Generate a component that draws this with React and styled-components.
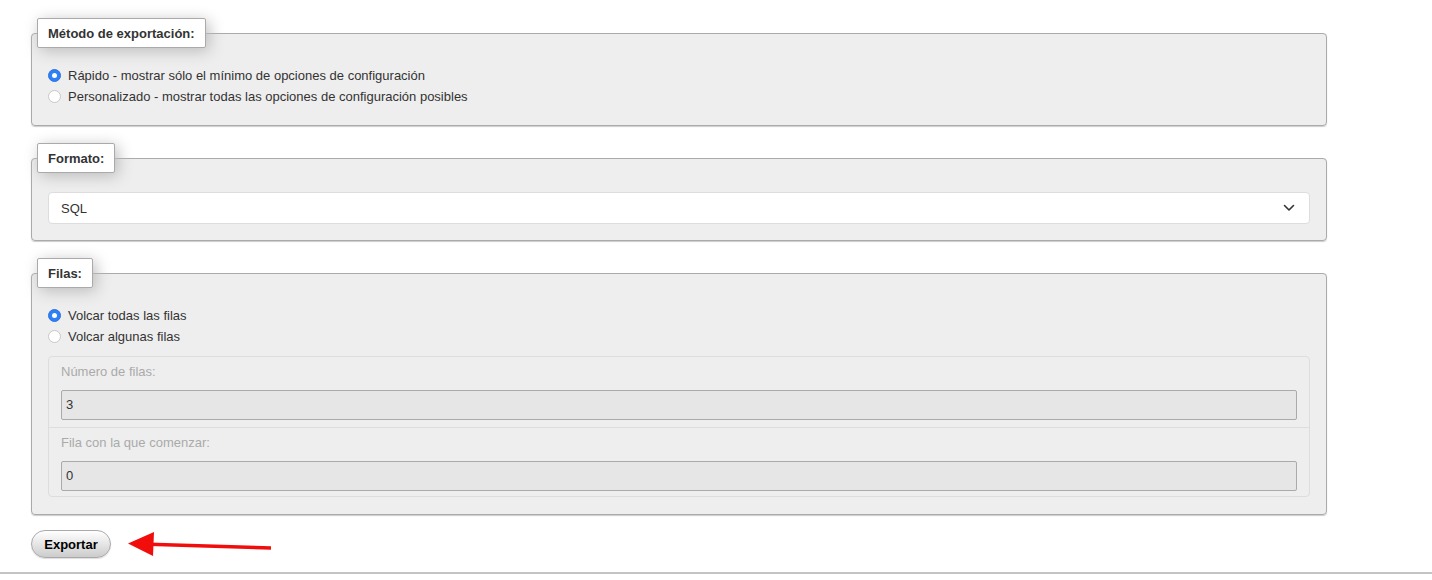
import styled, { createGlobalStyle } from 'styled-components';
import { useState } from "react";

const GlobalStyle = createGlobalStyle`
  html, body {
    margin: 0;
    padding: 0;
    background: #fff;
  }
  body {
    font-family: "Liberation Sans", Arial, sans-serif;
    font-size: 13px;
    color: #333;
  }
`;

const Page = styled.div`
  width: 1432px;
  height: 580px;
  overflow: hidden;
  padding-top: 18px;
  box-sizing: border-box;
`;

const Form = styled.form`
  margin-left: 31px;
  width: 1296px;
`;

const FieldSet = styled.fieldset`
  margin: 0 0 17px;
  padding: 16px 16px 17px;
  background: #eee;
  border: 1px solid #aaa;
  border-radius: 4px;
  box-shadow: 0 1px 1px #ccc;
  min-width: 0;
`;

const Legend = styled.legend`
  margin-left: -11px;
  padding: 0 10px;
  height: 30px;
  line-height: 30px;
  box-sizing: border-box;
  background: #fff;
  border: 1px solid #aaa;
  border-radius: 2px;
  box-shadow: 3px 3px 15px #bbb;
  font-weight: bold;
  color: #333;
  font-size: 13px;
`;

const RadioGroup = styled.div`
  display: flex;
  flex-direction: column;
  padding-top: 1px;
  margin-bottom: ${p => p.$after || 0}px;
`;

const RadioRow = styled.label`
  display: flex;
  align-items: center;
  height: 21px;
  line-height: 21px;
  cursor: pointer;
`;

const Radio = styled.span`
  width: 13px;
  height: 13px;
  box-sizing: border-box;
  border-radius: 50%;
  margin-right: 7px;
  flex-shrink: 0;
  background: ${p => (p.$checked ? '#2f7ff6' : '#fff')};
  border: 1px solid ${p => (p.$checked ? '#2a73e0' : '#c9c9c9')};
  display: flex;
  align-items: center;
  justify-content: center;

  &::after {
    content: "";
    width: 5px;
    height: 5px;
    border-radius: 50%;
    background: #fff;
    display: ${p => (p.$checked ? 'block' : 'none')};
  }
`;

const SelectBox = styled.div`
  margin: 3px 0 -1px;
  height: 32px;
  box-sizing: border-box;
  background: #fff;
  border: 1px solid #ddd;
  border-radius: 4px;
  display: flex;
  align-items: center;
  justify-content: space-between;
  padding: 0 14px 0 12px;
  color: #333;
`;

const SubBox = styled.div`
  margin-top: 9px;
  border: 1px solid #ddd;
  border-radius: 4px;
  display: flex;
  flex-direction: column;
`;

const SubRow = styled.div`
  padding: 6px 12px ${p => p.$bottom}px;
  display: flex;
  flex-direction: column;
  gap: 9px;
  & + & {
    border-top: 1px solid #ddd;
  }
`;

const SubLabel = styled.div`
  color: #aaa;
  line-height: 18px;
`;

const NumberInput = styled.div`
  height: 30px;
  box-sizing: border-box;
  background: #e6e6e6;
  border: 1px solid #aaa;
  border-radius: 2px;
  padding: 0 4px;
  line-height: 28px;
  color: #333;
`;

const ActionRow = styled.div`
  display: flex;
  align-items: center;
  margin-top: -2px;
  gap: 16px;
`;

const ExportButton = styled.button`
  width: 80px;
  height: 28px;
  border: 1px solid #aaa;
  border-radius: 15px;
  background: linear-gradient(#ffffff, #cccccc);
  box-shadow: 0 1px 1px #ddd;
  font-family: "Liberation Sans", Arial, sans-serif;
  font-size: 13px;
  font-weight: bold;
  color: #000;
  cursor: pointer;
`;

const BottomRule = styled.div`
  margin-top: 14px;
  height: 2px;
  background: #c4c4c4;
`;

const Chevron = () => (
  <svg width="12" height="8" viewBox="0 0 12 8" fill="none">
    <path d="M1.5 1.5 L6 6 L10.5 1.5" stroke="#333" strokeWidth="1.6" strokeLinecap="round" strokeLinejoin="round" />
  </svg>
);

const RedArrow = () => (
  <svg width="148" height="28" viewBox="0 1 148 28">
    <path d="M22 15.2 L144 19" stroke="#f20d0d" strokeWidth="3.5" strokeLinecap="butt" />
    <polygon points="1,14.5 27,3 26,27" fill="#f20d0d" />
  </svg>
);

const RadioOption = ({ checked, onClick, children }) => (
  <RadioRow onClick={onClick}>
    <Radio $checked={checked} />
    {children}
  </RadioRow>
);

export default function App() {
  const [method, setMethod] = useState('quick');
  const [rows, setRows] = useState('all');

  return (
    <Page>
      <GlobalStyle />
      <Form onSubmit={e => e.preventDefault()}>
        <FieldSet>
          <Legend>Método de exportación:</Legend>
          <RadioGroup $after={1}>
            <RadioOption checked={method === 'quick'} onClick={() => setMethod('quick')}>
              Rápido - mostrar sólo el mínimo de opciones de configuración
            </RadioOption>
            <RadioOption checked={method === 'custom'} onClick={() => setMethod('custom')}>
              Personalizado - mostrar todas las opciones de configuración posibles
            </RadioOption>
          </RadioGroup>
        </FieldSet>

        <FieldSet>
          <Legend>Formato:</Legend>
          <SelectBox>
            <span>SQL</span>
            <Chevron />
          </SelectBox>
        </FieldSet>

        <FieldSet>
          <Legend>Filas:</Legend>
          <RadioGroup>
            <RadioOption checked={rows === 'all'} onClick={() => setRows('all')}>
              Volcar todas las filas
            </RadioOption>
            <RadioOption checked={rows === 'some'} onClick={() => setRows('some')}>
              Volcar algunas filas
            </RadioOption>
          </RadioGroup>
          <SubBox>
            <SubRow $bottom={7}>
              <SubLabel>Número de filas:</SubLabel>
              <NumberInput>3</NumberInput>
            </SubRow>
            <SubRow $bottom={5}>
              <SubLabel>Fila con la que comenzar:</SubLabel>
              <NumberInput>0</NumberInput>
            </SubRow>
          </SubBox>
        </FieldSet>

        <ActionRow>
          <ExportButton type="submit">Exportar</ExportButton>
          <RedArrow />
        </ActionRow>
      </Form>
      <BottomRule />
    </Page>
  );
}
